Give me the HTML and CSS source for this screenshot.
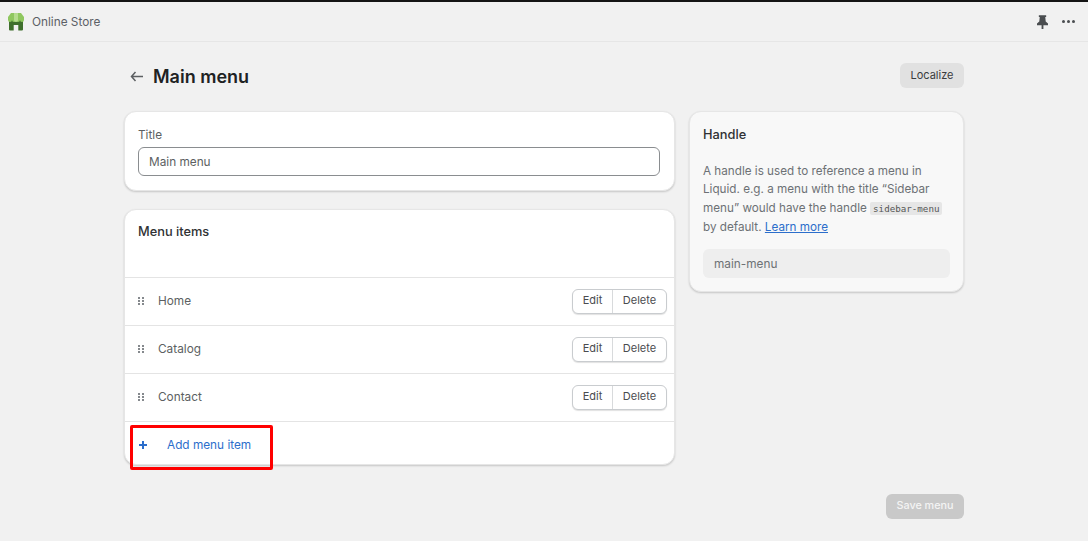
FILE: index.html
```html
<!DOCTYPE html>
<html lang="en">
<head>
    <meta charset="UTF-8">
    <meta name="viewport" content="width=device-width, initial-scale=1.0">
    <title>Main menu</title>
    <link rel="stylesheet" href="styles.css">
</head>
<body>

    <header class="topbar">
        <div class="app-name">
            <svg class="app-logo" width="16" height="18" viewBox="0 0 16 18">
                <path d="M1 7h14v9.500a1 1 0 0 1-1 1h-3.700v-5.500H5.700v5.500H2a1 1 0 0 1-1-1z" fill="#3f6f2c"/>
                <path d="M3 0h10l3 4v3a2 2 0 0 1-4 0 2 2 0 0 1-4 0 2 2 0 0 1-4 0 2 2 0 0 1-4 0V4z" fill="#8fc75f"/>
                <path d="M6 0h4v7a2 2 0 0 1-4 0z" fill="#b5dc8e"/>
            </svg>
            <span>Online Store</span>
        </div>
        <div class="top-actions">
            <svg width="11" height="14" viewBox="0 0 12 15">
                <path d="M2 0h8v2H9l.5 5L12 9v2H7v4H5v-4H0V9l2.500-2L3 2H2z" fill="#4a4d50"/>
            </svg>
            <div class="dots"><i></i><i></i><i></i></div>
        </div>
    </header>

    <main class="page">
        <div class="page-head">
            <div class="page-title">
                <svg width="13" height="11" viewBox="0 0 13 11">
                    <path d="M5.500 1 1.500 5.500 5.500 10M1.500 5.500H13" fill="none" stroke="#5c5f62" stroke-width="1.500"/>
                </svg>
                <h1>Main menu</h1>
            </div>
            <button class="btn-grey">Localize</button>
        </div>

        <div class="columns">
            <div class="main-col">
                <section class="card title-card">
                    <label>Title</label>
                    <div class="text-input">Main menu</div>
                </section>

                <section class="card menu-card">
                    <h2>Menu items</h2>

                    <div class="menu-row">
                        <svg class="grip" width="7" height="8" viewBox="0 0 7 8"><path d="M0 0h2v2H0zM4 0h2v2H4zM0 3h2v2H0zM4 3h2v2H4zM0 6h2v2H0zM4 6h2v2H4z" fill="#85898d"/></svg>
                        <span class="row-name">Home</span>
                        <div class="btn-group"><button>Edit</button><button>Delete</button></div>
                    </div>
                    <div class="menu-row">
                        <svg class="grip" width="7" height="8" viewBox="0 0 7 8"><path d="M0 0h2v2H0zM4 0h2v2H4zM0 3h2v2H0zM4 3h2v2H4zM0 6h2v2H0zM4 6h2v2H4z" fill="#85898d"/></svg>
                        <span class="row-name">Catalog</span>
                        <div class="btn-group"><button>Edit</button><button>Delete</button></div>
                    </div>
                    <div class="menu-row">
                        <svg class="grip" width="7" height="8" viewBox="0 0 7 8"><path d="M0 0h2v2H0zM4 0h2v2H4zM0 3h2v2H0zM4 3h2v2H4zM0 6h2v2H0zM4 6h2v2H4z" fill="#85898d"/></svg>
                        <span class="row-name">Contact</span>
                        <div class="btn-group"><button>Edit</button><button>Delete</button></div>
                    </div>

                    <div class="add-row">
                        <svg width="8" height="8" viewBox="0 0 8 8"><path d="M4 0v8M0 4h8" stroke="#2c6ecb" stroke-width="2"/></svg>
                        <span>Add menu item</span>
                    </div>
                    <!-- red highlight drawn over the add row -->
                    <div class="highlight"></div>
                </section>
            </div>

            <aside class="card side-card">
                <h2>Handle</h2>
                <p>A handle is used to reference a menu in Liquid. e.g. a menu with the title “Sidebar menu” would have the handle <code>sidebar-menu</code> by default. <a href="#">Learn more</a></p>
                <div class="handle-input">main-menu</div>
            </aside>
        </div>

        <div class="page-foot">
            <button class="btn-save">Save menu</button>
        </div>
    </main>

</body>
</html>
```

FILE: styles.css
```css
/* Global reset */
* {
    margin: 0;
    padding: 0;
    box-sizing: border-box;
}

body {
    font-family: Inter, 'Noto Sans', sans-serif;
    font-size: 11.8px;
    color: #5c5f62;
    background: #f1f1f1;
    height: 541px;
    overflow: hidden;
}

button {
    font-family: inherit;
}

/* Top bar */
.topbar {
    height: 42px;
    border-top: 2px solid #151515;
    border-bottom: 1px solid #e6e6e6;
    padding: 0 13px 0 8px;
    display: flex;
    justify-content: space-between;
    align-items: center;
}

.app-name {
    display: flex;
    align-items: center;
    gap: 8px;
    color: #5c6066;
}

.top-actions {
    display: flex;
    align-items: center;
    gap: 14px;
}

.dots {
    display: flex;
    gap: 2px;
}

.dots i {
    width: 3px;
    height: 3px;
    background: #4a4d50;
    border-radius: 50%;
}

/* Page */
.page {
    width: 840px;
    margin-left: 124px;
}

.page-head {
    height: 69px;
    display: flex;
    justify-content: space-between;
    align-items: center;
}

.page-title {
    display: flex;
    align-items: center;
    gap: 10px;
    padding-left: 6px;
}

.page-title h1 {
    font-size: 18px;
    font-weight: 600;
    color: #202223;
}

.btn-grey {
    width: 64px;
    height: 25px;
    margin-top: -3px;
    padding-bottom: 1px;
    border: none;
    border-radius: 6px;
    background: #e1e1e1;
    color: #3a3c3e;
    font-size: 11px;
}

.columns {
    display: flex;
    align-items: flex-start;
    gap: 14px;
}

.main-col {
    width: 551px;
    display: flex;
    flex-direction: column;
    gap: 18px;
}

.card {
    background: #fff;
    border: 1px solid #e6e6e6;
    border-radius: 12px;
    box-shadow: 0 1px 2px rgba(0, 0, 0, 0.18);
}

h2 {
    font-size: 12.8px;
    font-weight: 500;
    color: #303234;
}

/* Title card */
.title-card {
    height: 80px;
    padding: 15px 14px 0 13px;
}

.title-card label {
    display: block;
    line-height: 16px;
    margin-bottom: 4px;
}

.text-input {
    height: 29px;
    line-height: 29px;
    padding-left: 10px;
    border: 1px solid #8a8d90;
    border-radius: 6px;
}

/* Menu items */
.menu-card {
    position: relative;
    height: 256px;
}

.menu-card h2 {
    height: 67px;
    padding: 14px 13px 0;
    line-height: 16px;
}

.menu-row {
    height: 48px;
    border-top: 1px solid #e4e4e4;
    display: flex;
    align-items: center;
    padding: 0 7px 1px 13px;
}

.grip {
    margin-right: 13px;
}

.row-name {
    flex: 1;
}

.btn-group {
    display: flex;
    height: 25px;
    background: #fff;
    border: 1px solid #c9cccf;
    border-radius: 6px;
    box-shadow: 0 1px 1px rgba(0, 0, 0, 0.12);
}

.btn-group button {
    border: none;
    background: none;
    color: #4a4c4f;
    font-size: 11px;
    width: 39px;
    padding-bottom: 2px;
}

.btn-group button + button {
    width: 54px;
    border-left: 1px solid #d8dadc;
}

.add-row {
    height: 44px;
    border-top: 1px solid #e4e4e4;
    display: flex;
    align-items: center;
    gap: 20px;
    padding: 2px 0 0 14px;
    color: #2c6ecb;
}

.highlight {
    position: absolute;
    left: 5px;
    top: 215px;
    width: 143px;
    height: 45px;
    border: 3px solid #ff0000;
    border-radius: 2px;
}

/* Handle card */
.side-card {
    width: 275px;
    height: 181px;
    padding: 15px 13px 0;
    background: #f8f8f8;
}

.side-card h2 {
    line-height: 16px;
    margin-bottom: 19px;
}

.side-card p {
    font-size: 11.7px;
    color: #6d7175;
    line-height: 18.300px;
}

.side-card code {
    font-family: 'DejaVu Sans Mono', monospace;
    font-size: 9.200px;
    background: #e6e6e6;
    border-radius: 2px;
    padding: 1px 3px;
    color: #555;
}

.side-card a {
    color: #2c6ecb;
}

.handle-input {
    height: 29px;
    line-height: 30px;
    margin-top: 13px;
    padding-left: 11px;
    background: #eeeeee;
    border-radius: 6px;
    color: #6d7175;
}

/* Footer button */
.page-foot {
    display: flex;
    justify-content: flex-end;
    margin-top: 29px;
}

.btn-save {
    width: 78px;
    height: 25px;
    padding-bottom: 3px;
    border: none;
    border-radius: 6px;
    background: #c9c9c9;
    color: #f4f4f4;
    font-size: 10.800px;
    font-weight: 500;
}
```
